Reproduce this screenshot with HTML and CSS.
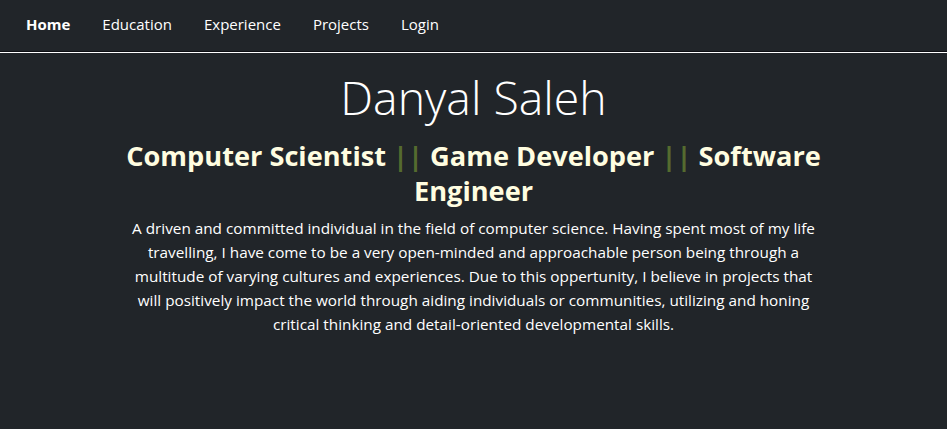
FILE: index.html
```html
<!DOCTYPE html>
<html lang="en">
<head>
<meta charset="utf-8">
<title>Danyal Saleh</title>
<link rel="stylesheet" href="styles.css">
</head>
<body>
<nav class="navbar">
  <ul class="nav-list">
    <li><a class="nav-link active" href="#">Home</a></li>
    <li><a class="nav-link" href="#">Education</a></li>
    <li><a class="nav-link" href="#">Experience</a></li>
    <li><a class="nav-link" href="#">Projects</a></li>
    <li><a class="nav-link" href="#">Login</a></li>
  </ul>
</nav>
<main class="container">
  <h1 class="name">Danyal Saleh</h1>
  <h2 class="roles">Computer Scientist <span class="sep">||</span> Game Developer <span class="sep">||</span> Software Engineer</h2>
  <p class="bio">A driven and committed individual in the field of computer science. Having spent most of my life travelling, I have come to be a very open-minded and approachable person being through a multitude of varying cultures and experiences. Due to this oppertunity, I believe in projects that will positively impact the world through aiding individuals or communities, utilizing and honing critical thinking and detail-oriented developmental skills.</p>
</main>
</body>
</html>
```
FILE: styles.css
```css
html, body {
  margin: 0;
  padding: 0;
  background: #212529;
  color: #ffffff;
  font-family: "Open Sans", "Noto Sans", sans-serif;
  font-size: 15.3px;
  line-height: 1.5;
}

.navbar {
  height: 53px;
  box-sizing: border-box;
  border-bottom: 1px solid #ffffff;
  box-shadow: inset 0 -1px 0 #0d0e12;
  display: flex;
  align-items: center;
  padding: 0 10px 4px;
}

.nav-list {
  list-style: none;
  margin: 0;
  padding: 0;
  display: flex;
}

.nav-link {
  display: block;
  padding: 0 16px;
  color: #ffffff;
  text-decoration: none;
  font-size: 15px;
}

.nav-link.active {
  font-weight: 700;
}

.container {
  width: 698px;
  margin: 0 auto;
  text-align: center;
}

.name {
  margin: 17px 0 0;
  font-size: 46.4px;
  font-weight: 300;
  line-height: 1.2;
}

.roles {
  margin: 12px 0 0;
  font-size: 27.2px;
  font-weight: 700;
  line-height: 35px;
  color: #fffde0;
}

.sep {
  color: #556b2f;
}

.bio {
  margin: 8px 0 0;
  font-size: 15.3px;
  line-height: 24px;
}
```
